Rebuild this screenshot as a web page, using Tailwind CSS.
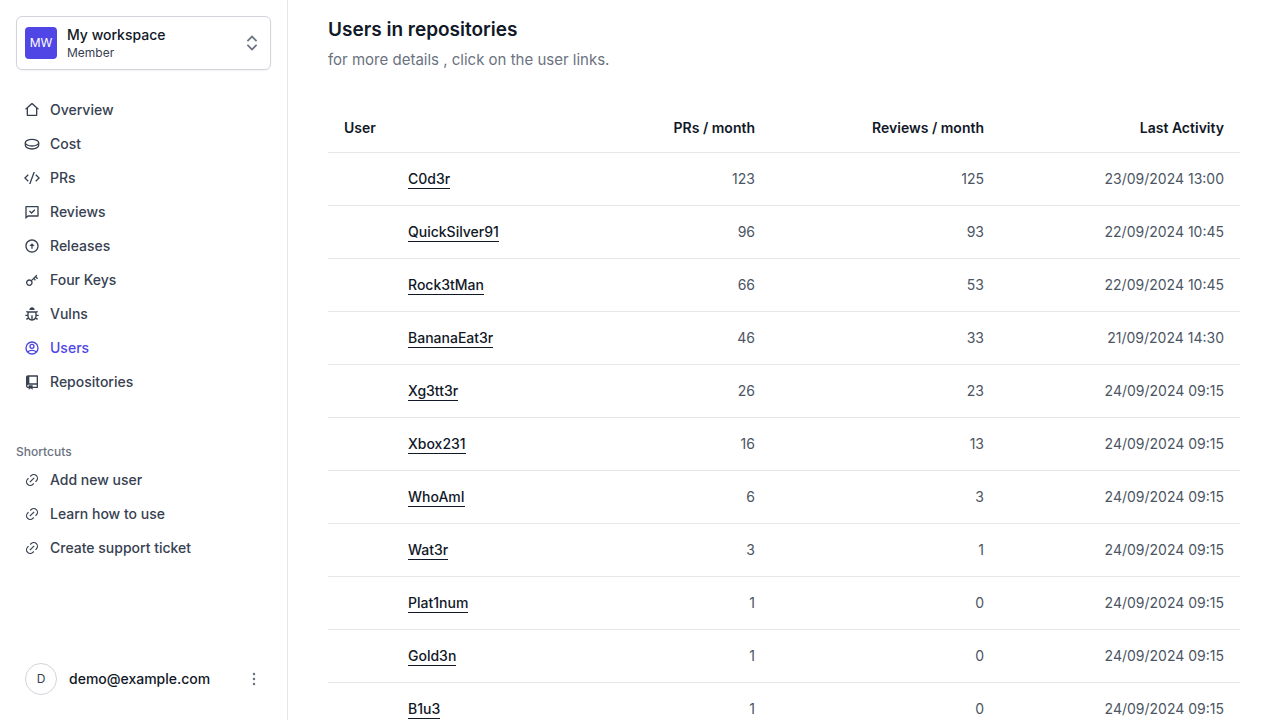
<!DOCTYPE html>
<html lang="en">
<head>
<meta charset="utf-8">
<meta name="viewport" content="width=device-width, initial-scale=1">
<title>Users in repositories</title>
<script src="https://cdn.jsdelivr.net/npm/@tailwindcss/browser@4"></script>
</head>
<body class="flex bg-white font-['Inter',sans-serif] text-[#111827] antialiased">

<aside class="sticky top-0 flex h-screen w-72 shrink-0 flex-col border-r border-[#e5e7eb] p-4">
  <button type="button" class="flex w-full items-center gap-2.5 rounded-md border border-[#d1d5db] bg-white p-2 text-left shadow-xs">
    <span class="flex size-8 items-center justify-center rounded bg-[#4f46e5] text-xs text-white">MW</span>
    <span class="flex flex-1 flex-col">
      <span class="text-sm font-medium leading-5 text-[#111827]">My workspace</span>
      <span class="text-xs leading-4 text-[#374151]">Member</span>
    </span>
    <svg class="size-5 text-[#6b7280]" viewBox="0 0 24 24" fill="currentColor" aria-hidden="true"><path d="M18.2072 9.0428L12.0001 2.8357L5.793 9.0428L7.2072 10.4571L12.0001 5.6642L16.793 10.4571L18.2072 9.0428ZM5.793 14.9572L12.0001 21.1643L18.2072 14.9572L16.793 13.543L12.0001 18.3359L7.2072 13.543L5.793 14.9572Z"/></svg>
  </button>

  <nav class="mt-6 flex flex-1 flex-col" aria-label="Main">
    <ul class="flex flex-col gap-0.5 text-sm font-medium text-[#374151]">
      <li><a href="#" class="flex items-center gap-2.5 px-2 py-1.5">
        <svg class="size-4" viewBox="0 0 24 24" fill="currentColor" aria-hidden="true"><path d="M19 21H5C4.44772 21 4 20.5523 4 20V11L1 11L11.3273 1.6115C11.7087 1.26475 12.2913 1.26475 12.6727 1.6115L23 11L20 11V20C20 20.5523 19.5523 21 19 21ZM6 19H18V9.15745L12 3.7029L6 9.15745V19Z"/></svg>
        Overview</a></li>
      <li><a href="#" class="flex items-center gap-2.5 px-2 py-1.5">
        <svg class="size-4" viewBox="0 0 24 24" fill="none" stroke="currentColor" stroke-width="2" aria-hidden="true"><ellipse cx="12" cy="10" rx="10" ry="5"/><path d="M2 10V14C2 17 6.500 19.500 12 19.500S22 17 22 14V10"/></svg>
        Cost</a></li>
      <li><a href="#" class="flex items-center gap-2.5 px-2 py-1.5">
        <svg class="size-4" viewBox="0 0 24 24" fill="currentColor" aria-hidden="true"><path d="M24 12L18.3431 17.6569L16.9289 16.2426L21.1716 12L16.9289 7.75736L18.3431 6.34315L24 12ZM2.82843 12L7.07107 16.2426L5.65685 17.6569L0 12L5.65685 6.34315L7.07107 7.75736L2.82843 12ZM9.78845 21H7.66009L14.2116 3H16.3399L9.78845 21Z"/></svg>
        PRs</a></li>
      <li><a href="#" class="flex items-center gap-2.5 px-2 py-1.5">
        <svg class="size-4" viewBox="0 0 24 24" fill="currentColor" aria-hidden="true"><path d="M6.45455 19L2 22.5V4C2 3.44772 2.44772 3 3 3H21C21.5523 3 22 3.44772 22 4V18C22 18.5523 21.5523 19 21 19H6.45455ZM4 18.3851L5.76282 17H20V5H4V18.3851ZM11.2929 12.1213L15.5355 7.87868L16.9497 9.29289L11.2929 14.9497L7.40381 11.0607L8.81802 9.64645L11.2929 12.1213Z"/></svg>
        Reviews</a></li>
      <li><a href="#" class="flex items-center gap-2.5 px-2 py-1.5">
        <svg class="size-4" viewBox="0 0 24 24" fill="currentColor" aria-hidden="true"><path d="M12 2C17.52 2 22 6.48 22 12C22 17.52 17.52 22 12 22C6.48 22 2 17.52 2 12C2 6.48 6.48 2 12 2ZM12 20C16.42 20 20 16.42 20 12C20 7.58 16.42 4 12 4C7.58 4 4 7.58 4 12C4 16.42 7.58 20 12 20ZM13 12V16H11V12H8L12 8L16 12H13Z"/></svg>
        Releases</a></li>
      <li><a href="#" class="flex items-center gap-2.5 px-2 py-1.5">
        <svg class="size-4" viewBox="0 0 24 24" fill="currentColor" aria-hidden="true"><path d="M10.7577 11.8281L18.6066 3.97919L20.0208 5.3934L18.6066 6.80761L21.0815 9.28249L19.6673 10.6967L17.1924 8.22183L15.7782 9.63604L17.8995 11.7574L16.4853 13.1716L14.364 11.0503L12.1719 13.2423C13.4581 15.1837 13.246 17.8251 11.5355 19.5355C9.58291 21.4882 6.41709 21.4882 4.46447 19.5355C2.51184 17.5829 2.51184 14.4171 4.46447 12.4645C6.17493 10.754 8.81633 10.5419 10.7577 11.8281ZM10.1213 18.1213C11.2929 16.9497 11.2929 15.0503 10.1213 13.8787C8.94975 12.7071 7.05025 12.7071 5.87868 13.8787C4.70711 15.0503 4.70711 16.9497 5.87868 18.1213C7.05025 19.2929 8.94975 19.2929 10.1213 18.1213Z"/></svg>
        Four Keys</a></li>
      <li><a href="#" class="flex items-center gap-2.5 px-2 py-1.5">
        <svg class="size-4" viewBox="0 0 24 24" fill="currentColor" aria-hidden="true"><path d="M13 19.9C15.28 19.4367 17 17.419 17 15V12C17 11.299 16.8798 10.6219 16.6586 10H7.34141C7.12016 10.6219 7 11.299 7 12V15C7 17.419 8.71776 19.4367 11 19.9V14H13V19.9ZM5.5358 17.6907C5.19061 16.8623 5 15.9534 5 15H2V13H5V12C5 11.3573 5.08661 10.7348 5.2488 10.1436L3.0359 8.86602L4.0359 7.13397L6.05636 8.30049C6.11995 8.19854 6.18609 8.09835 6.25469 8H17.7453C17.8139 8.09835 17.88 8.19854 17.9436 8.30049L19.9641 7.13397L20.9641 8.86602L18.7512 10.1436C18.9134 10.7348 19 11.3573 19 12V13H22V15H19C19 15.9534 18.8094 16.8623 18.4642 17.6907L20.9641 19.134L19.9641 20.866L17.4383 19.4077C16.1549 20.9893 14.1955 22 12 22C9.80453 22 7.84512 20.9893 6.56171 19.4077L4.0359 20.866L3.0359 19.134L5.5358 17.6907ZM8 6C8 3.79086 9.79086 2 12 2C14.2091 2 16 3.79086 16 6H8Z"/></svg>
        Vulns</a></li>
      <li><a href="#" aria-current="page" class="flex items-center gap-2.5 px-2 py-1.5 text-[#4f46e5]">
        <svg class="size-4" viewBox="0 0 24 24" fill="none" stroke="currentColor" stroke-width="2" aria-hidden="true"><circle cx="12" cy="12" r="9"/><circle cx="12" cy="9.500" r="3"/><path d="M5.500 18C7.200 16.300 9.500 15.500 12 15.500S16.800 16.300 18.500 18"/></svg>
        Users</a></li>
      <li><a href="#" class="flex items-center gap-2.5 px-2 py-1.5">
        <svg class="size-4" viewBox="0 0 24 24" fill="currentColor" aria-hidden="true"><path d="M13 21V23.5L10 21.5L7 23.5V21H6.5C4.567 21 3 19.433 3 17.5V5C3 3.34315 4.34315 2 6 2H20C20.5523 2 21 2.44772 21 3V20C21 20.5523 20.5523 21 20 21H13ZM13 19H19V16H6.5C5.67157 16 5 16.6716 5 17.5C5 18.3284 5.67157 19 6.5 19H7V17H13V19ZM19 14V4H8V14H19Z"/></svg>
        Repositories</a></li>
    </ul>

    <h2 class="mt-11 text-xs font-medium leading-5 text-[#6b7280]">Shortcuts</h2>
    <ul class="mt-0.5 flex flex-col gap-0.5 text-sm font-medium text-[#374151]">
      <li><a href="#" class="flex items-center gap-2.5 px-2 py-1.5">
        <svg class="size-4" viewBox="-1 -1 26 26" fill="currentColor" aria-hidden="true"><path d="M18.364 15.536L16.95 14.12l1.414-1.414a5 5 0 1 0-7.071-7.071L9.879 7.05 8.464 5.636 9.88 4.222a7 7 0 0 1 9.9 9.9l-1.415 1.414zm-2.828 2.828l-1.415 1.414a7 7 0 0 1-9.9-9.9l1.415-1.414L7.05 9.88l-1.414 1.414a5 5 0 1 0 7.071 7.071l1.414-1.414 1.415 1.414zm-.708-10.607l1.415 1.415-7.071 7.07-1.415-1.414 7.071-7.07z"/></svg>
        Add new user</a></li>
      <li><a href="#" class="flex items-center gap-2.5 px-2 py-1.5">
        <svg class="size-4" viewBox="-1 -1 26 26" fill="currentColor" aria-hidden="true"><path d="M18.364 15.536L16.95 14.12l1.414-1.414a5 5 0 1 0-7.071-7.071L9.879 7.05 8.464 5.636 9.88 4.222a7 7 0 0 1 9.9 9.9l-1.415 1.414zm-2.828 2.828l-1.415 1.414a7 7 0 0 1-9.9-9.9l1.415-1.414L7.05 9.88l-1.414 1.414a5 5 0 1 0 7.071 7.071l1.414-1.414 1.415 1.414zm-.708-10.607l1.415 1.415-7.071 7.07-1.415-1.414 7.071-7.07z"/></svg>
        Learn how to use</a></li>
      <li><a href="#" class="flex items-center gap-2.5 px-2 py-1.5">
        <svg class="size-4" viewBox="-1 -1 26 26" fill="currentColor" aria-hidden="true"><path d="M18.364 15.536L16.95 14.12l1.414-1.414a5 5 0 1 0-7.071-7.071L9.879 7.05 8.464 5.636 9.88 4.222a7 7 0 0 1 9.9 9.9l-1.415 1.414zm-2.828 2.828l-1.415 1.414a7 7 0 0 1-9.9-9.9l1.415-1.414L7.05 9.88l-1.414 1.414a5 5 0 1 0 7.071 7.071l1.414-1.414 1.415 1.414zm-.708-10.607l1.415 1.415-7.071 7.07-1.415-1.414 7.071-7.07z"/></svg>
        Create support ticket</a></li>
    </ul>
  </nav>

  <button type="button" class="flex w-full items-center gap-3 rounded-md border border-transparent p-2 text-left text-sm font-medium text-[#111827]">
    <span class="flex size-8 items-center justify-center rounded-full border border-[#d1d5db] bg-white text-xs font-normal text-[#374151]">D</span>
    <span class="flex-1">demo@example.com</span>
    <svg class="size-4 text-[#6b7280]" viewBox="0 0 24 24" fill="currentColor" aria-hidden="true"><circle cx="12" cy="4.500" r="1.900"/><circle cx="12" cy="12" r="1.900"/><circle cx="12" cy="19.500" r="1.900"/></svg>
  </button>
</aside>

<main class="min-w-0 flex-1 px-10 pt-4">
  <h1 class="text-[19px] font-semibold leading-7 text-[#111827]">Users in repositories</h1>
  <p class="mt-1 text-[15px] leading-6 text-[#6b7280]">for more details , click on the user links.</p>

  <table class="mt-8 w-full table-fixed text-right text-sm text-[#4b5563]">
    <colgroup>
      <col>
      <col class="w-48">
      <col class="w-[229px]">
      <col class="w-60">
    </colgroup>
    <thead class="font-semibold text-[#111827]">
      <tr class="border-b border-[#e5e7eb]">
        <th scope="col" class="px-4 py-3.5 text-left font-semibold">User</th>
        <th scope="col" class="px-4 py-3.5 font-semibold">PRs / month</th>
        <th scope="col" class="px-4 py-3.5 font-semibold">Reviews / month</th>
        <th scope="col" class="px-4 py-3.5 font-semibold">Last Activity</th>
      </tr>
    </thead>
    <tbody class="divide-y divide-[#e5e7eb]">
      <tr><td class="py-4 pl-20 text-left font-medium text-[#111827]"><a href="#" class="border-b border-[#111827] pb-px">C0d3r</a></td><td class="p-4">123</td><td class="p-4">125</td><td class="p-4">23/09/2024 13:00</td></tr>
      <tr><td class="py-4 pl-20 text-left font-medium text-[#111827]"><a href="#" class="border-b border-[#111827] pb-px">QuickSilver91</a></td><td class="p-4">96</td><td class="p-4">93</td><td class="p-4">22/09/2024 10:45</td></tr>
      <tr><td class="py-4 pl-20 text-left font-medium text-[#111827]"><a href="#" class="border-b border-[#111827] pb-px">Rock3tMan</a></td><td class="p-4">66</td><td class="p-4">53</td><td class="p-4">22/09/2024 10:45</td></tr>
      <tr><td class="py-4 pl-20 text-left font-medium text-[#111827]"><a href="#" class="border-b border-[#111827] pb-px">BananaEat3r</a></td><td class="p-4">46</td><td class="p-4">33</td><td class="p-4">21/09/2024 14:30</td></tr>
      <tr><td class="py-4 pl-20 text-left font-medium text-[#111827]"><a href="#" class="border-b border-[#111827] pb-px">Xg3tt3r</a></td><td class="p-4">26</td><td class="p-4">23</td><td class="p-4">24/09/2024 09:15</td></tr>
      <tr><td class="py-4 pl-20 text-left font-medium text-[#111827]"><a href="#" class="border-b border-[#111827] pb-px">Xbox231</a></td><td class="p-4">16</td><td class="p-4">13</td><td class="p-4">24/09/2024 09:15</td></tr>
      <tr><td class="py-4 pl-20 text-left font-medium text-[#111827]"><a href="#" class="border-b border-[#111827] pb-px">WhoAmI</a></td><td class="p-4">6</td><td class="p-4">3</td><td class="p-4">24/09/2024 09:15</td></tr>
      <tr><td class="py-4 pl-20 text-left font-medium text-[#111827]"><a href="#" class="border-b border-[#111827] pb-px">Wat3r</a></td><td class="p-4">3</td><td class="p-4">1</td><td class="p-4">24/09/2024 09:15</td></tr>
      <tr><td class="py-4 pl-20 text-left font-medium text-[#111827]"><a href="#" class="border-b border-[#111827] pb-px">Plat1num</a></td><td class="p-4">1</td><td class="p-4">0</td><td class="p-4">24/09/2024 09:15</td></tr>
      <tr><td class="py-4 pl-20 text-left font-medium text-[#111827]"><a href="#" class="border-b border-[#111827] pb-px">Gold3n</a></td><td class="p-4">1</td><td class="p-4">0</td><td class="p-4">24/09/2024 09:15</td></tr>
      <tr><td class="py-4 pl-20 text-left font-medium text-[#111827]"><a href="#" class="border-b border-[#111827] pb-px">B1u3</a></td><td class="p-4">1</td><td class="p-4">0</td><td class="p-4">24/09/2024 09:15</td></tr>
    </tbody>
  </table>
</main>
</body>
</html>
